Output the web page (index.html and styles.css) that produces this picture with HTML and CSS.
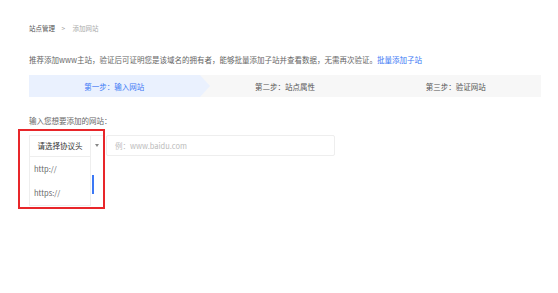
FILE: index.html
```html
<!DOCTYPE html>
<html lang="zh-CN">
<head>
    <meta charset="UTF-8">
    <meta name="viewport" content="width=device-width, initial-scale=1.0">
    <title>添加网站</title>
    <link rel="stylesheet" href="styles.css">
</head>
<body>
    <div class="page">
        <!-- Breadcrumb -->
        <div class="breadcrumb">
            <span class="crumb-main">站点管理</span>
            <span class="crumb-sep">&gt;</span>
            <span class="crumb-current">添加网站</span>
        </div>

        <p class="intro">推荐添加www主站，验证后可证明您是该域名的拥有者，能够批量添加子站并查看数据，无需再次验证。<a href="#" class="link">批量添加子站</a></p>

        <!-- Steps -->
        <div class="steps">
            <div class="step active">第一步：输入网站</div>
            <div class="step">第二步：站点属性</div>
            <div class="step">第三步：验证网站</div>
        </div>

        <div class="field-label">输入您想要添加的网站：</div>

        <div class="form-row">
            <div class="select">
                <div class="select-value">请选择协议头</div>
                <div class="select-arrow"></div>
                <ul class="dropdown">
                    <li>http://</li>
                    <li>https://</li>
                </ul>
                <div class="scroll-bar"></div>
            </div>
            <div class="url-input">例：www.baidu.com</div>
            <div class="highlight"></div>
        </div>
    </div>
</body>
</html>
```

FILE: styles.css
```css
/* General Reset */
html, body {
    height: 100%;
}

body {
    margin: 0;
    padding: 0;
    background: #fff;
    color: #555;
    font-family: "Noto Sans CJK SC", "Liberation Sans", sans-serif;
}

.page {
    min-height: 100%;
    box-sizing: border-box;
    padding: 23px 17px 0 29px;
}

/* Breadcrumb */
.breadcrumb {
    font-size: 6.5px;
    line-height: 10px;
    color: #555;
}

.crumb-sep {
    margin: 0 6px 0 5px;
    color: #999;
}

.crumb-current {
    color: #aaa;
}

/* Intro text */
.intro {
    margin: 22px 0 0;
    font-size: 7.5px;
    line-height: 10px;
    color: #666;
}

.link {
    color: #3c78f5;
    text-decoration: none;
}

/* Steps */
.steps {
    display: flex;
    margin-top: 10px;
    height: 22px;
    background: #f7f7f7;
}

.step {
    flex: 1;
    position: relative;
    display: flex;
    justify-content: center;
    align-items: center;
    font-size: 7.5px;
    color: #555;
}

.step.active {
    background: #eaf1fe;
    color: #3c78f5;
}

.step.active::after {
    content: "";
    position: absolute;
    right: -10px;
    top: 0;
    border-top: 11px solid transparent;
    border-bottom: 11px solid transparent;
    border-left: 10px solid #eaf1fe;
}

/* Form */
.field-label {
    margin-top: 19px;
    font-size: 7.5px;
    line-height: 10px;
    color: #666;
}

.form-row {
    position: relative;
    display: flex;
    gap: 2px;
    margin-top: 9px;
}

.select {
    position: relative;
    display: flex;
    flex: none;
    width: 75px;
    height: 21px;
    box-sizing: border-box;
    border-top: 1px solid #eee;
    border-left: 1px solid #eee;
}

.select-value {
    flex: none;
    width: 61px;
    line-height: 20px;
    text-align: center;
    font-size: 7.5px;
    color: #333;
    border-right: 1px solid #eee;
    box-sizing: border-box;
    white-space: nowrap;
}

.select-arrow {
    flex: 1;
    position: relative;
}

.select-arrow::after {
    content: "";
    position: absolute;
    left: 4px;
    top: 8px;
    border-left: 2.5px solid transparent;
    border-right: 2.5px solid transparent;
    border-top: 3px solid #888;
}

.dropdown {
    position: absolute;
    left: -1px;
    top: 20px;
    width: 62px;
    margin: 0;
    padding: 0;
    list-style: none;
    background: #fff;
    border: 1px solid #eee;
    box-sizing: border-box;
}

.dropdown li {
    height: 24px;
    line-height: 24px;
    padding-left: 4px;
    font-size: 7.5px;
    color: #666;
}

.scroll-bar {
    position: absolute;
    left: 62px;
    top: 39px;
    width: 2px;
    height: 19px;
    background: #3c78f5;
}

.url-input {
    flex: none;
    width: 229px;
    height: 21px;
    box-sizing: border-box;
    border: 1px solid #eee;
    border-radius: 2px;
    padding-left: 8px;
    display: flex;
    align-items: center;
    font-size: 7.5px;
    color: #bbb;
}

/* Annotation box */
.highlight {
    position: absolute;
    left: -11px;
    top: -6px;
    width: 87px;
    height: 80px;
    box-sizing: border-box;
    border: 2px solid #e8262a;
}
```
